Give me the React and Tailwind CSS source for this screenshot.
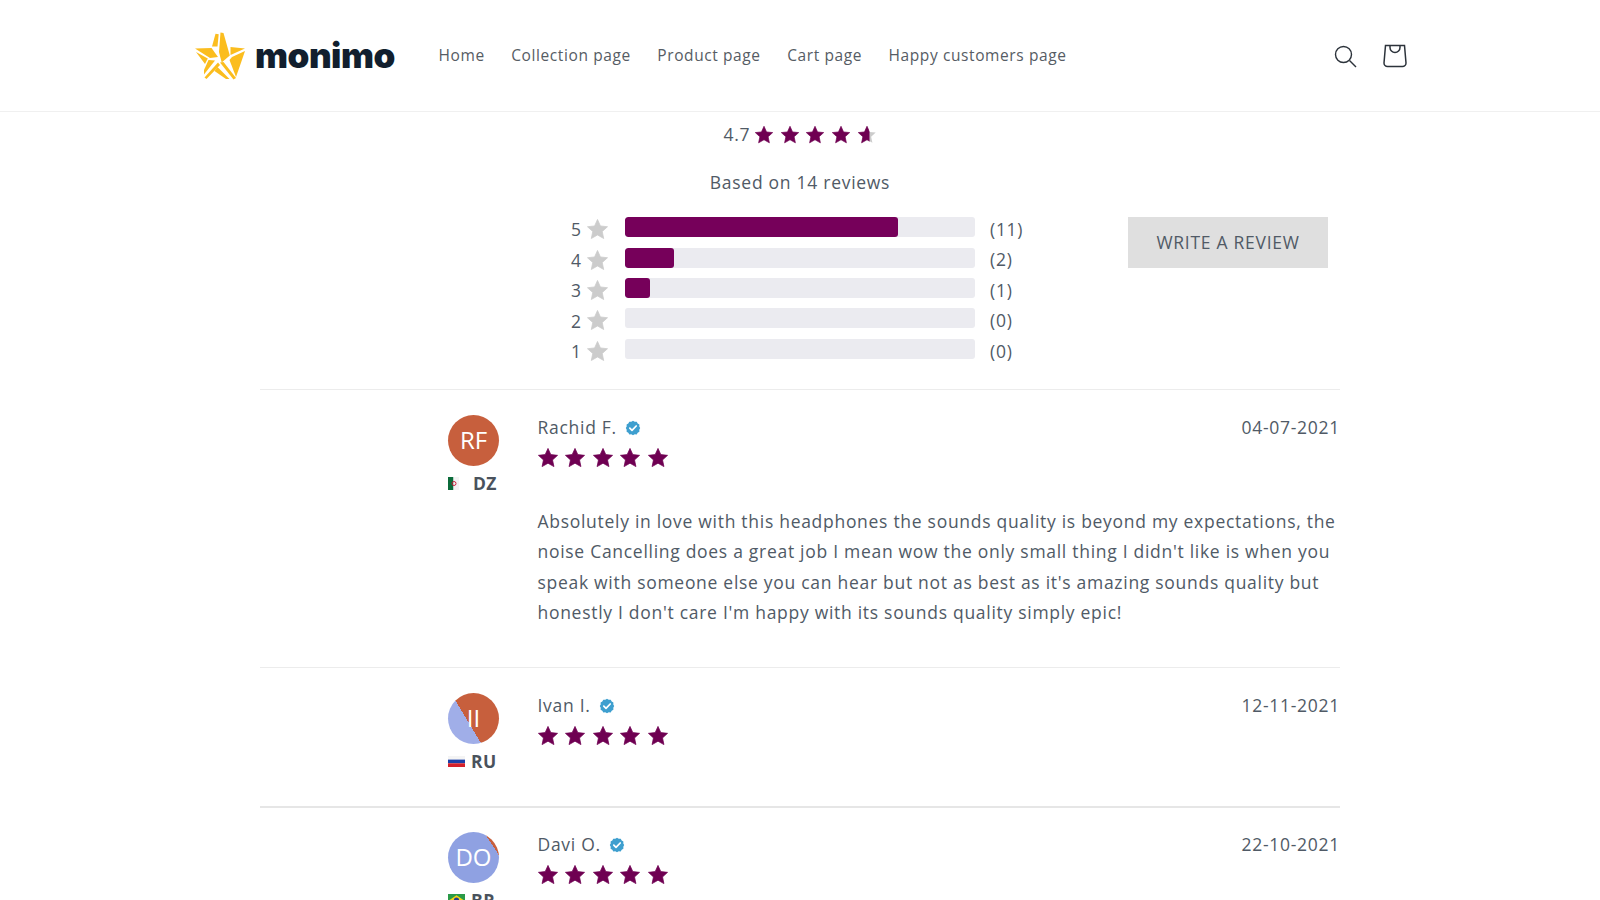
import React from "react";

const STAR = "M12 1.5L15.06 8.29 22.46 9.1 16.95 14.1 18.47 21.4 12 17.7 5.53 21.4 7.05 14.1 1.54 9.1 8.94 8.29Z";

function Star({ size = 20, color = "#6f0052", className = "" }) {
  return (
    <svg width={size} height={size} viewBox="0 0 24 24" className={className}>
      <path d={STAR} fill={color} stroke={color} strokeWidth="0.8" strokeLinejoin="round" />
    </svg>
  );
}

function HalfStar({ size = 20 }) {
  return (
    <svg width={size} height={size} viewBox="0 0 24 24">
      <path d={STAR} fill="#cccccc" />
      <clipPath id="half"><rect x="0" y="0" width="15" height="24" /></clipPath>
      <path d={STAR} fill="#6f0052" stroke="#6f0052" strokeWidth="0.8" clipPath="url(#half)" />
    </svg>
  );
}

function Logo() {
  return (
    <svg width="51" height="48" viewBox="0 0 51 48" className="shrink-0">
      <g fill="#fbbd1e">
        <path d="M25.5 .5L28.5 1 34.8 23.5 26.7 30.5 24 20Z" />
        <path d="M20.5 1.7L23.7 2.3 22.5 14.5 17 14.5Z" />
        <path d="M0 16.5L16.5 16 23 25 15 26Z" />
        <path d="M1 20L12.8 26.5 10 32Z" />
        <path d="M13.5 28L20 28.5 9 42.5 9 38Z" />
        <path d="M23 30.5L25 33 11.5 47 9.5 45.5Z" />
        <path d="M35.5 15L50 16.5 35.5 23Z" />
        <path d="M50 19L37 25 34.5 28 41 45 44.5 35Z" />
        <path d="M25 30.5L28.5 30 41 46 38.5 47.5Z" />
        <path d="M22.5 35L34.5 47 31 47 19.5 39Z" />
      </g>
    </svg>
  );
}

function Check() {
  return (
    <svg width="16" height="16" viewBox="0 0 16 16" className="shrink-0 mt-[1px]">
      <path d="M8 .8l1.7 1 2-.1 1 1.7 1.7 1-.1 2L15.2 8l-.9 1.7.1 2-1.7 1-1 1.7-2-.1-1.7.9-1.7-.9-2 .1-1-1.7-1.7-1 .1-2L.8 8l.9-1.6-.1-2 1.7-1 1-1.7 2 .1z" fill="#3e9fcf" />
      <path d="M4.8 8.2l2.2 2.2 4.2-4.4" fill="none" stroke="#fff" strokeWidth="1.7" strokeLinecap="round" strokeLinejoin="round" />
    </svg>
  );
}

function Algeria() {
  return (
    <svg width="11" height="13" viewBox="0 0 11 13" className="shrink-0">
      <rect width="5.5" height="13" fill="#0b6b3a" />
      <rect x="5.5" width="5.5" height="13" fill="#f3f3f3" />
      <circle cx="6" cy="6.5" r="2" fill="none" stroke="#c8102e" strokeWidth="0.9" />
    </svg>
  );
}

function Russia() {
  return (
    <svg width="17" height="11" viewBox="0 0 17 11" className="shrink-0">
      <rect width="17" height="3.6" fill="#f4f4f4" />
      <rect y="3.6" width="17" height="3.7" fill="#1c3fa8" />
      <rect y="7.3" width="17" height="3.7" fill="#d5202b" />
    </svg>
  );
}

function Brazil() {
  return (
    <svg width="17" height="12" viewBox="0 0 17 12" className="shrink-0">
      <rect width="17" height="12" fill="#2a9a48" />
      <path d="M8.5 1.2L15.5 6l-7 4.8L1.5 6z" fill="#f7d417" />
      <circle cx="8.5" cy="6" r="2.6" fill="#27408b" />
    </svg>
  );
}

function Avatar({ initials, kind }) {
  const bg =
    kind === "half"
      ? "linear-gradient(59deg, #a0aee8 0 41%, #c75f3d 41% 100%)"
      : kind === "blue"
      ? "linear-gradient(57deg, #8fa1e2 0 82%, #c75f3d 82% 100%)"
      : "#c75f3d";
  return (
    <div
      className="w-[51px] h-[51px] rounded-full flex items-center justify-center pb-[2px] text-white text-[24px] leading-none"
      style={{ background: bg }}
    >
      {initials}
    </div>
  );
}

function Review({ initials, kind, flag, country, flagGap, name, date, text, thick, height }) {
  return (
    <div className={`flex pl-[188px] ${thick ? "border-t-2 border-[#e6e6e6] pt-[24px]" : "border-t border-[#ececec] pt-[25px]"} ${height}`}>
      <div className="w-[89.5px] shrink-0">
        <Avatar initials={initials} kind={kind} />
        <div className={`flex items-center ${flagGap} mt-[4px] h-[26px] text-[17.5px] font-bold text-[#4a525c] tracking-[0.4px]`}>
          {flag}
          <span>{country}</span>
        </div>
      </div>
      <div className="flex-1 min-w-0 -mt-[1px]">
        <div className="flex justify-between items-center h-[26px]">
          <div className="flex items-center gap-[8px] text-[17.5px] text-[#505a66] tracking-[0.72px]">
            <span>{name}</span>
            <Check />
          </div>
          <span className="text-[17.5px] text-[#505a66] tracking-[0.72px]">{date}</span>
        </div>
        <div className="flex gap-[5.6px] mt-[7px] -ml-[1px]">
          {[0, 1, 2, 3, 4].map((i) => (
            <Star key={i} size={22} />
          ))}
        </div>
        {text && (
          <p className="mt-[37px] text-[17.5px] leading-[30.4px] text-[#505a66] tracking-[0.71px]">{text}</p>
        )}
      </div>
    </div>
  );
}

function Bar({ n, pct, count }) {
  return (
    <div className="flex items-center h-[30.4px]">
      <span className="w-[12px] mt-[2px] text-[17.5px] text-[#505a66] leading-none">{n}</span>
      <div className="w-[34px] pl-[3px] mt-[1px]"><Star size={23} color="#cccccc" /></div>
      <div className="w-[350px] h-[20px] -mt-[4px] ml-[8px] rounded-[3px] bg-[#ebebf0] overflow-hidden">
        <div className="h-full bg-[#76005a] rounded-[3px]" style={{ width: pct + "%" }} />
      </div>
      <span className="ml-[15px] text-[17.5px] text-[#505a66] tracking-[0.72px]">({count})</span>
    </div>
  );
}

export default function App() {
  return (
    <div className="w-[1600px] h-[900px] overflow-hidden bg-white" style={{ fontFamily: '"Open Sans", sans-serif' }}>
      <header className="h-[112px] border-b border-[#f0f0f0] flex items-center pl-[195px] pr-[193px]">
        <div className="flex items-center w-[243.5px]">
          <Logo />
          <span className="ml-[9px] text-[#121f2e] text-[35px] font-black leading-none tracking-[-0.5px]" style={{ fontFamily: "Inter, sans-serif" }}>monimo</span>
        </div>
        <nav className="flex gap-[26.5px] mt-[1px] text-[15.5px] text-[#565c64] tracking-[0.6px]">
          <span>Home</span>
          <span>Collection page</span>
          <span>Product page</span>
          <span>Cart page</span>
          <span>Happy customers page</span>
        </nav>
        <div className="ml-auto flex items-center gap-[25px]">
          <svg width="24" height="24" viewBox="0 0 24 24" fill="none" stroke="#2c333b" strokeWidth="1.4">
            <circle cx="10.5" cy="10.5" r="8" />
            <path d="M16.5 16.5L23 23" />
          </svg>
          <svg width="24" height="24" viewBox="0 0 24 24" fill="none" stroke="#2c333b" strokeWidth="1.5" className="ml-[1px]">
            <path d="M2.5 1.5h19L23 19c0 2-1.6 3.5-3.5 3.5h-15C2.6 22.5 1 21 1 19z" />
            <path d="M7 2v1.5a5 5 0 0 0 10 0V2" />
          </svg>
        </div>
      </header>

      <section className="w-[1080px] mx-auto">
        <div className="flex items-center justify-center h-[44px] text-[#505a66] text-[17.5px]">
          <span className="tracking-[0.72px] mr-[4px]">4.7</span>
          <div className="flex gap-[5.6px] mt-[1px]">
            <Star />
            <Star />
            <Star />
            <Star />
            <HalfStar />
          </div>
        </div>
        <div className="text-center text-[17.5px] text-[#505a66] tracking-[0.72px] leading-[24px] mt-[14px]">Based on 14 reviews</div>
        <div className="relative h-[175px] mt-[20px] pl-[311px]">
          <Bar n={5} pct={78} count={11} />
          <Bar n={4} pct={14} count={2} />
          <Bar n={3} pct={7} count={1} />
          <Bar n={2} pct={0} count={0} />
          <Bar n={1} pct={0} count={0} />
          <div className="absolute left-[868px] top-[3px] w-[200px] h-[51px] bg-[#dfdfdf] flex items-center justify-center text-[17.5px] text-[#505a66] tracking-[0.72px]">
            WRITE A REVIEW
          </div>
        </div>
        <Review
          initials="RF"
          kind="solid"
          flag={<Algeria />}
          flagGap="gap-[14px]"
          country="DZ"
          name="Rachid F."
          date="04-07-2021"
          height="h-[278px]"
          text="Absolutely in love with this headphones the sounds quality is beyond my expectations, the noise Cancelling does a great job I mean wow the only small thing I didn't like is when you speak with someone else you can hear but not as best as it's amazing sounds quality but honestly I don't care I'm happy with its sounds quality simply epic!"
        />
        <Review
          initials="II"
          kind="half"
          flag={<Russia />}
          flagGap="gap-[6px]"
          country="RU"
          name="Ivan I."
          date="12-11-2021"
          height="h-[139px]"
        />
        <Review
          initials="DO"
          kind="blue"
          flag={<Brazil />}
          flagGap="gap-[6px]"
          country="BR"
          name="Davi O."
          date="22-10-2021"
          thick
          height="h-[140px]"
        />
      </section>
    </div>
  );
}
